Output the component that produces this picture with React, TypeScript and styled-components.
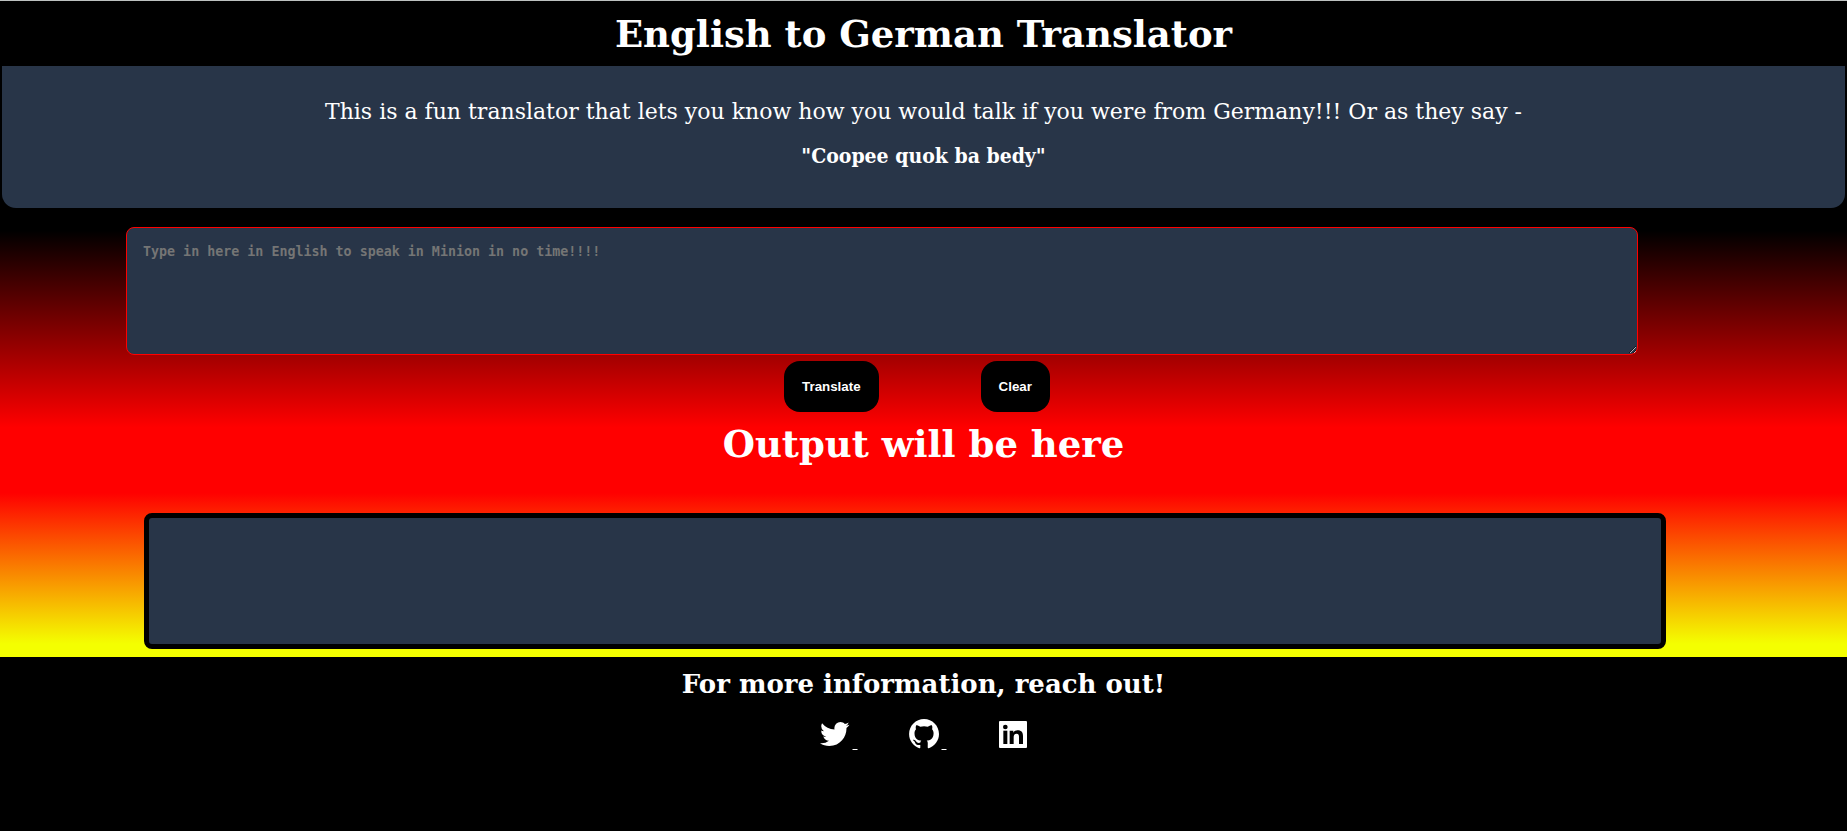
import React, { useState } from "react";
import styled, { createGlobalStyle } from "styled-components";
import { BiLogoTwitter, BiLogoGithub } from "react-icons/bi";

const GlobalStyle = createGlobalStyle`
  * { box-sizing: border-box; }
  body {
    margin: 0;
    background: #000;
    color: #fff;
    font-family: "Special Elite", "DejaVu Serif", serif;
  }
`;

const Main = styled.main`
  border-top: 1px solid #bdc1c0;
  padding-bottom: 8px;
  background: linear-gradient(#000 35%, #f00 65%, #f00 75%, #f4ff00 98%);
`;

const Title = styled.h1`
  margin: 0;
  height: 65px;
  line-height: 66px;
  font-size: 37px;
  text-align: center;
  background: #000;
`;

const Intro = styled.section`
  margin: 0 2px;
  padding: 24px 16px 30px;
  border-radius: 0 0 14px 14px;
  background: #283548;
  text-align: center;
  font-size: 22px;
  line-height: 44px;

  p { margin: 0; }
  strong { font-family: "Special Elite", "DejaVu Serif Condensed", "DejaVu Serif", serif; font-size: 21px; }
`;

const Source = styled.textarea`
  display: block;
  box-sizing: content-box;
  width: 80%;
  height: 94px;
  margin: 19px 0 0 126px;
  padding: 16px;
  border: 1px solid #f00;
  border-radius: 8px;
  background: #283548;
  color: #fff;
  font-family: "DejaVu Sans Mono", monospace;
  font-weight: bold;

  &::placeholder { color: #757575; }
`;

const Actions = styled.div`
  display: flex;
  justify-content: center;
  gap: 102px;
  margin-top: 6px;
  padding-right: 13px;
`;

const ActionButton = styled.button`
  height: 51px;
  padding: 0 18px;
  border: 0;
  border-radius: 16px;
  background: #000;
  color: #fff;
  font-family: "Liberation Sans", Arial, sans-serif;
  font-weight: bold;
`;

const OutputTitle = styled.h2`
  margin: 0;
  height: 101px;
  line-height: 64px;
  font-size: 37px;
  text-align: center;
`;

const Output = styled.output`
  display: block;
  box-sizing: content-box;
  width: 80%;
  height: 94px;
  margin-left: 144px;
  padding: 16px 17px;
  border: 5px solid #000;
  border-radius: 8px;
  background: #283548;
`;

const Footer = styled.footer`
  padding-top: 3px;
  text-align: center;
`;

const FooterTitle = styled.h3`
  margin: 0;
  font-size: 26px;
  line-height: 48px;
`;

const Links = styled.nav`
  display: flex;
  justify-content: center;
  gap: 48px;
  margin-top: 8px;
`;

const SocialLink = styled.a`
  color: #fff;
  font-family: "Liberation Serif", serif;
  font-size: 20px;
  line-height: 36px;
  white-space: pre;
  text-decoration: underline;
  text-decoration-thickness: 1px;

  svg {
    width: 36px;
    height: 36px;
    vertical-align: -4px;
  }
`;

const LinkedinIcon = () => (
  <svg viewBox="0 0 108 108" fill="none" aria-hidden="true">
    <rect x="12" y="15" width="84" height="81" rx="3" fill="#fff" />
    <circle cx="31" cy="33" r="7" fill="#000" />
    <path d="M25 44h12v40H25z" fill="#000" />
    <path
      d="M44 44h11v6c3-5 7-7 13-7 12 0 16 7 16 18v23H72V63c0-6-1-10-7-10-7 0-9 5-9 11v20H44z"
      fill="#000"
    />
  </svg>
);

export default function App() {
  const [text, setText] = useState("");
  const [output, setOutput] = useState("");

  return (
    <>
      <GlobalStyle />
      <Main>
        <Title>English to German Translator</Title>
        <Intro>
          <p>This is a fun translator that lets you know how you would talk if you were from Germany!!! Or as they say -</p>
          <p><strong>"Coopee quok ba bedy"</strong></p>
        </Intro>
        <Source
          aria-label="English text"
          placeholder="Type in here in English to speak in Minion in no time!!!!"
          value={text}
          onChange={(e) => setText(e.target.value)}
        />
        <Actions>
          <ActionButton type="button" onClick={() => setOutput(text)}>Translate</ActionButton>
          <ActionButton type="button" onClick={() => { setText(""); setOutput(""); }}>Clear</ActionButton>
        </Actions>
        <OutputTitle>Output will be here</OutputTitle>
        <Output aria-label="Translation">{output}</Output>
      </Main>
      <Footer>
        <FooterTitle>For more information, reach out!</FooterTitle>
        <Links aria-label="Social links">
          <SocialLink href="#twitter" aria-label="Twitter"><BiLogoTwitter />{" "}</SocialLink>
          <SocialLink href="#github" aria-label="GitHub"><BiLogoGithub />{" "}</SocialLink>
          <SocialLink href="#linkedin" aria-label="LinkedIn"><LinkedinIcon /></SocialLink>
        </Links>
      </Footer>
    </>
  );
}
